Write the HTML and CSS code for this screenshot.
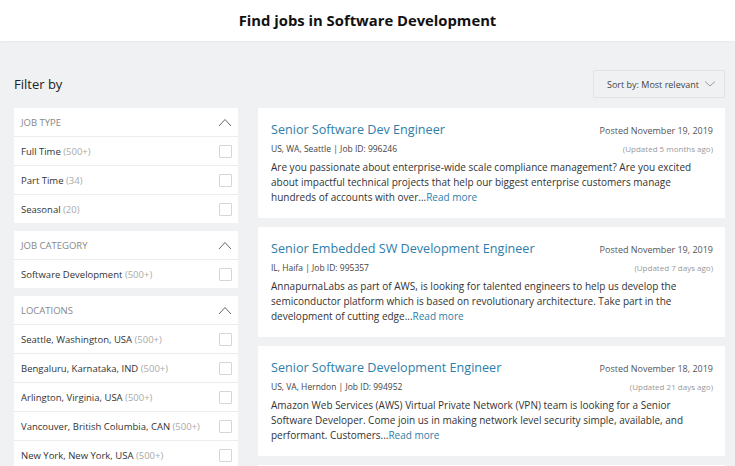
FILE: index.html
```html
<!DOCTYPE html>
<html lang="en">
<head>
  <meta charset="UTF-8" />
  <meta name="viewport" content="width=device-width, initial-scale=1.0"/>
  <title>Find jobs in Software Development</title>
  <link rel="stylesheet" href="styles.css">
</head>
<body>
  <div class="page-header">
    <h1>Find jobs in Software Development</h1>
  </div>

  <div class="search-page">
    <div class="toolbar">
      <h2>Filter by</h2>
      <div class="sort-select">
        <span>Sort by: Most relevant</span>
        <svg width="12" height="8" viewBox="0 0 12 8"><path d="M1 1.5 L6 6 L11 1.5" fill="none" stroke="#9a9ca0" stroke-width="1"/></svg>
      </div>
    </div>

    <div class="search-layout">
      <div class="filters">
        <div class="filter-panel">
          <div class="filter-head">
            <span>JOB TYPE</span>
            <svg class="chevron" width="14" height="9" viewBox="0 0 14 9"><path d="M1 8 L7 1.5 L13 8" fill="none" stroke="#666" stroke-width="1"/></svg>
          </div>
          <div class="filter-row"><span>Full Time <em>(500+)</em></span><span class="check"></span></div>
          <div class="filter-row"><span>Part Time <em>(34)</em></span><span class="check"></span></div>
          <div class="filter-row"><span>Seasonal <em>(20)</em></span><span class="check"></span></div>
        </div>

        <div class="filter-panel">
          <div class="filter-head">
            <span>JOB CATEGORY</span>
            <svg class="chevron" width="14" height="9" viewBox="0 0 14 9"><path d="M1 8 L7 1.5 L13 8" fill="none" stroke="#666" stroke-width="1"/></svg>
          </div>
          <div class="filter-row"><span>Software Development <em>(500+)</em></span><span class="check"></span></div>
        </div>

        <div class="filter-panel">
          <div class="filter-head">
            <span>LOCATIONS</span>
            <svg class="chevron" width="14" height="9" viewBox="0 0 14 9"><path d="M1 8 L7 1.5 L13 8" fill="none" stroke="#666" stroke-width="1"/></svg>
          </div>
          <div class="filter-row"><span>Seattle, Washington, USA <em>(500+)</em></span><span class="check"></span></div>
          <div class="filter-row"><span>Bengaluru, Karnataka, IND <em>(500+)</em></span><span class="check"></span></div>
          <div class="filter-row"><span>Arlington, Virginia, USA <em>(500+)</em></span><span class="check"></span></div>
          <div class="filter-row"><span>Vancouver, British Columbia, CAN <em>(500+)</em></span><span class="check"></span></div>
          <div class="filter-row"><span>New York, New York, USA <em>(500+)</em></span><span class="check"></span></div>
        </div>
      </div>

      <div class="job-list">
        <div class="job-card">
          <div class="job-top">
            <a class="job-title" href="#">Senior Software Dev Engineer</a>
            <span class="posted">Posted November 19, 2019</span>
          </div>
          <div class="job-meta">
            <span>US, WA, Seattle | Job ID: 996246</span>
            <span class="updated">(Updated 5 months ago)</span>
          </div>
          <p class="job-desc">Are you passionate about enterprise-wide scale compliance management? Are you excited about impactful technical projects that help our biggest enterprise customers manage hundreds of accounts with over...<a href="#">Read more</a></p>
        </div>

        <div class="job-card">
          <div class="job-top">
            <a class="job-title" href="#">Senior Embedded SW Development Engineer</a>
            <span class="posted">Posted November 19, 2019</span>
          </div>
          <div class="job-meta">
            <span>IL, Haifa | Job ID: 995357</span>
            <span class="updated">(Updated 7 days ago)</span>
          </div>
          <p class="job-desc">AnnapurnaLabs as part of AWS, is looking for talented engineers to help us develop the semiconductor platform which is based on revolutionary architecture. Take part in the development of cutting edge...<a href="#">Read more</a></p>
        </div>

        <div class="job-card">
          <div class="job-top">
            <a class="job-title" href="#">Senior Software Development Engineer</a>
            <span class="posted">Posted November 18, 2019</span>
          </div>
          <div class="job-meta">
            <span>US, VA, Herndon | Job ID: 994952</span>
            <span class="updated">(Updated 21 days ago)</span>
          </div>
          <p class="job-desc">Amazon Web Services (AWS) Virtual Private Network (VPN) team is looking for a Senior Software Developer. Come join us in making network level security simple, available, and performant. Customers...<a href="#">Read more</a></p>
        </div>

        <div class="job-card empty"></div>
      </div>
    </div>
  </div>
</body>
</html>
```

FILE: styles.css
```css
* {
  margin: 0;
  padding: 0;
  box-sizing: border-box;
}

:root {
  --fundo: #f0f1f3;
  --branco: #ffffff;
  --texto: #333333;
  --linha: #ececec;
  --azul: #2d7eaa;
}

body {
  font-family: "Open Sans", Arial, sans-serif;
  background-color: var(--fundo);
  color: var(--texto);
  height: 466px;
  overflow: hidden;
}

.page-header {
  background-color: var(--branco);
  height: 41px;
  display: flex;
  align-items: center;
  justify-content: center;
  padding-bottom: 2px;
  box-shadow: 0 1px 2px rgba(0, 0, 0, 0.04);
}

.page-header h1 {
  font-size: 14.8px;
  font-weight: 700;
  color: #111;
}

.search-page {
  padding: 0 10px 0 14px;
}

.toolbar {
  display: flex;
  align-items: center;
  justify-content: space-between;
  padding-top: 29px;
  margin-bottom: 10px;
}

.toolbar h2 {
  font-size: 13px;
  font-weight: 400;
  color: #222;
}

.sort-select {
  width: 132px;
  height: 28px;
  border: 1px solid #e2e3e6;
  border-radius: 2px;
  display: flex;
  align-items: center;
  justify-content: space-between;
  padding: 0 8px 0 13px;
  font-size: 9px;
  color: #444;
}

.search-layout {
  display: flex;
  gap: 20px;
  align-items: flex-start;
}

.filters {
  width: 224px;
  display: flex;
  flex-direction: column;
  gap: 8px;
}

.filter-panel {
  background-color: var(--branco);
}

.filter-head {
  height: 28px;
  display: flex;
  align-items: center;
  justify-content: space-between;
  padding: 0 6px 0 7px;
  font-size: 9.5px;
  color: #888;
}

.filter-row {
  height: 29px;
  border-top: 1px solid var(--linha);
  display: flex;
  align-items: center;
  justify-content: space-between;
  padding: 0 6px 0 7px;
  font-size: 9.5px;
  color: #333;
}

.filter-row em {
  font-style: normal;
  color: #aaa;
}

.check {
  width: 13px;
  height: 13px;
  border: 1px solid #d6d6d6;
  border-radius: 1px;
}

.job-list {
  flex: 1;
  display: flex;
  flex-direction: column;
  gap: 9px;
}

.job-card {
  background-color: var(--branco);
  padding: 12px 12px 13px 13px;
}

.job-card.empty {
  height: 40px;
}

.job-top,
.job-meta {
  display: flex;
  justify-content: space-between;
  align-items: baseline;
}

.job-title {
  font-size: 12.6px;
  line-height: 20px;
  color: var(--azul);
  text-decoration: none;
}

.posted {
  font-size: 9px;
  color: #555;
}

.job-meta {
  font-size: 8.5px;
  line-height: 14px;
  color: #444;
  margin-top: 2px;
}

.updated {
  font-size: 8px;
  color: #999;
}

.job-desc {
  font-size: 10px;
  line-height: 15px;
  color: #333;
  margin-top: 4px;
}

.job-desc a {
  color: var(--azul);
  text-decoration: none;
}
```
